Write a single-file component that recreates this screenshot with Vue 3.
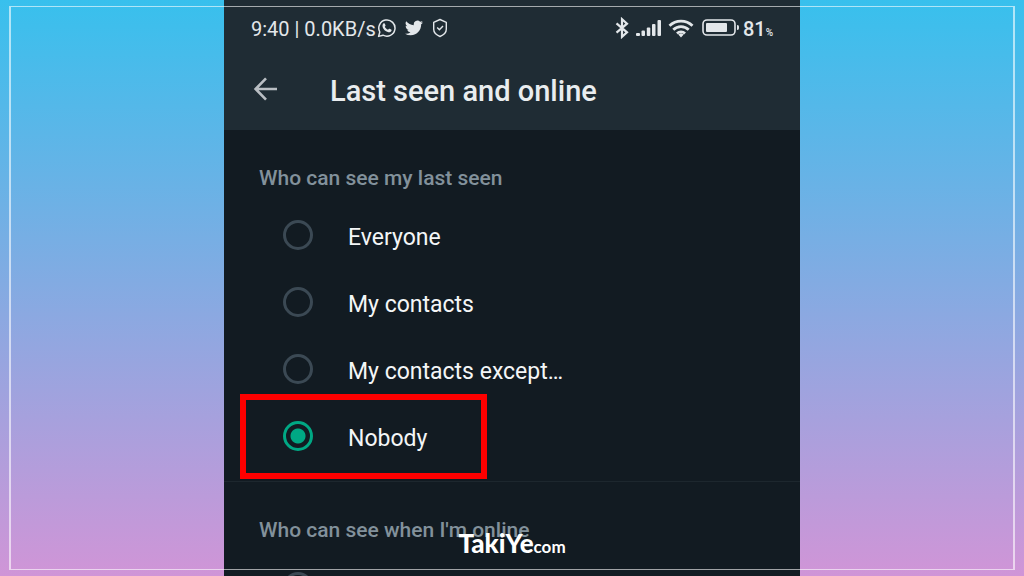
<script setup>
import { ref } from 'vue'

const options = [
  { value: 'everyone', label: 'Everyone' },
  { value: 'contacts', label: 'My contacts' },
  { value: 'except', label: 'My contacts except…' },
  { value: 'nobody', label: 'Nobody' },
]
const lastSeen = ref('nobody')
const online = ref('')
</script>

<template>
  <div class="page">
    <main class="phone">
      <header class="top">
        <div class="status">
          <span class="clock">9:40 | 0.0KB/s</span>
          <svg class="whatsapp" viewBox="0 0 20 20" width="20" height="20" fill="none" stroke="currentColor">
            <path d="M1.6 18.4 2.8 14A8.1 8.1 0 1 1 6 17.2Z" stroke-width="1.5" stroke-linejoin="round" />
            <path d="M6.3 5.6c.4-.5 1.2-.5 1.5.1l.7 1.5c.1.3 0 .6-.2.9l-.5.6c.7 1.4 1.7 2.4 3.2 3.1l.8-.8c.2-.3.5-.3.8-.2l1.5.7c.6.3.6.8.3 1.4-.7 1.3-2.1 1.7-3.6 1.2-2.5-.8-4.4-2.8-5.1-4.9-.4-1.4-.2-2.6.6-3.6Z" fill="currentColor" stroke="none" />
          </svg>
          <svg class="bird" viewBox="0 0 24 24" width="18" height="18" fill="currentColor">
            <path d="M23.950 4.570a10 10 0 0 1-2.820.770 4.960 4.960 0 0 0 2.160-2.720c-.950.550-2 .950-3.130 1.180a4.920 4.920 0 0 0-8.380 4.480C7.690 8.090 4.070 6.130 1.640 3.160a4.920 4.920 0 0 0 1.520 6.570 4.900 4.900 0 0 1-2.230-.610v.060a4.920 4.920 0 0 0 3.950 4.830 5 5 0 0 1-2.210.080 4.940 4.940 0 0 0 4.600 3.420A9.870 9.870 0 0 1 0 19.540a14 14 0 0 0 7.550 2.210c9.050 0 14-7.500 14-13.980l-.020-.640a9.940 9.940 0 0 0 2.420-2.560Z" />
          </svg>
          <svg class="shield" viewBox="0 0 16 20" width="16" height="20" fill="none" stroke="currentColor" stroke-width="1.4" stroke-linejoin="round">
            <path d="M8 1.500 14.300 4.300v7c0 3.400-3 5.900-6.300 7.200-3.300-1.300-6.300-3.800-6.300-7.200v-7Z" />
            <path d="m5.200 9.500 2.200 2.200 3.600-3.800" />
          </svg>
          <span class="spacer"></span>
          <svg class="bluetooth" viewBox="0 0 14 22" width="14" height="22" fill="none" stroke="currentColor" stroke-width="2.200">
            <path d="m1.500 6.300 10.500 9-5 4.500V2.200l5 4.500-10.500 9" />
          </svg>
          <svg class="signal" viewBox="0 0 26 18" width="26" height="18" fill="currentColor">
            <rect x="0" y="14" width="4" height="3" rx="1" />
            <rect x="5.500" y="11.500" width="3.500" height="5.500" rx="1" />
            <rect x="10.800" y="8.500" width="3.500" height="8.500" rx="1" />
            <rect x="16" y="5" width="3.500" height="12" rx="1" />
            <rect x="21.500" y="1" width="3.500" height="16" rx="1" />
          </svg>
          <svg class="wifi" viewBox="0 0 26 19" width="26" height="19" fill="none" stroke="currentColor" stroke-width="2.800">
            <path d="M1.500 6.800a16.500 16.500 0 0 1 23 0M5.300 10.800a11 11 0 0 1 15.400 0M9 14.500a5.800 5.800 0 0 1 8 0" />
            <path d="m10.300 15.600 2.700 2.900 2.700-2.900a4 4 0 0 0-5.400 0Z" fill="currentColor" stroke="none" />
          </svg>
          <svg class="battery" viewBox="0 0 38 18" width="38" height="18" fill="none">
            <rect x="1" y="1" width="32" height="15" rx="4" stroke="currentColor" stroke-width="1.600" />
            <rect x="4" y="4" width="21" height="9" rx="1" fill="currentColor" />
            <path d="M35 6c1.600 0 2 .8 2 2.500S36.600 11 35 11Z" fill="currentColor" />
          </svg>
          <span class="level">81<small>%</small></span>
        </div>
        <div class="bar">
          <button class="back" type="button" aria-label="Back">
            <svg viewBox="0 0 24 24" width="24" height="24" fill="none" stroke="currentColor" stroke-width="2.600">
              <path d="M24 12H3M13 1.300 2.600 12 13 22.700" />
            </svg>
          </button>
          <h1>Last seen and online</h1>
        </div>
      </header>

      <fieldset class="group">
        <legend>Who can see my last seen</legend>
        <label v-for="o in options" :key="o.value" class="option" :class="{ marked: o.value === 'nobody' }">
          <input v-model="lastSeen" type="radio" name="last-seen" :value="o.value" />
          <span>{{ o.label }}</span>
        </label>
      </fieldset>
      <fieldset class="group">
        <legend>Who can see when I'm online</legend>
        <label class="option">
          <input v-model="online" type="radio" name="online" value="everyone" aria-label="Everyone" />
        </label>
      </fieldset>
    </main>
    <div class="frame"></div>
    <div class="brand">TakiYe<small>com</small></div>
  </div>
</template>

<style>
body {
  margin: 0;
}
</style>

<style scoped>
.page {
  position: relative;
  height: 100vh;
  overflow: hidden;
  display: flex;
  justify-content: center;
  background: linear-gradient(#38c0ed, #d095d7);
  font-family: Roboto, "Liberation Sans", sans-serif;
}
.phone {
  width: 56.25%;
  background: #121b22;
  color: #e9edef;
}
.top {
  height: 130px;
  background: #1f2c34;
}
.status {
  display: flex;
  align-items: center;
  height: 56px;
  padding: 0 27px;
  color: #e3e7ea;
  font-size: 20px;
  white-space: nowrap;
}
.status svg {
  flex: none;
}
.status span {
  padding-top: 2px;
}
.whatsapp {
  margin-left: 1px;
}
.bird {
  margin-left: 8px;
}
.shield {
  margin-left: 9px;
}
.spacer {
  flex: 1;
}
.signal {
  margin-left: 7px;
}
.wifi {
  margin-left: 6px;
}
.battery {
  margin-left: 8px;
}
.level {
  margin-left: 3px;
  font-weight: 500;
}
.level small {
  font-size: 10px;
}
.bar {
  display: flex;
  align-items: center;
  height: 66px;
  padding-left: 29px;
}
.back {
  display: flex;
  padding: 0;
  border: 0;
  background: none;
  color: #b9bec3;
}
h1 {
  margin: 0 0 0 53px;
  padding-top: 4px;
  font-size: 29px;
  font-weight: 500;
  line-height: 34px;
  white-space: nowrap;
}
.group {
  margin: 0;
  padding: 0 0 12px;
  border: 0;
  border-bottom: 1px solid #1d272e;
  min-width: 0;
}
legend {
  box-sizing: border-box;
  height: 71px;
  padding: 36px 0 0 35px;
  color: #82919b;
  font-size: 21px;
  font-weight: 500;
  line-height: 24px;
}
.option {
  position: relative;
  display: flex;
  align-items: center;
  gap: 35px;
  height: 67px;
  padding-left: 59px;
  color: #f4f6f7;
  font-size: 23px;
}
.option span {
  padding-top: 5px;
}
.option input {
  appearance: none;
  flex: none;
  box-sizing: border-box;
  width: 30px;
  height: 30px;
  margin: 0;
  border: 3px solid #3b4954;
  border-radius: 50%;
}
.option input:checked {
  border-color: #00a884;
  background: radial-gradient(circle, #00a884 7px, transparent 8px);
}
.marked::after {
  content: "";
  position: absolute;
  box-sizing: border-box;
  top: -8px;
  bottom: -10px;
  left: 16px;
  width: 247px;
  border: 6px solid #fe0000;
}
.frame {
  position: absolute;
  inset: 6px 9px;
  border: 1px solid rgba(255, 255, 255, 0.6);
  border-width: 1px 2px;
  pointer-events: none;
}
.brand {
  position: absolute;
  bottom: 15px;
  left: 50%;
  transform: translateX(-50%);
  color: #fff;
  font-family: Lato, sans-serif;
  font-size: 26px;
  font-weight: 900;
  line-height: 28px;
  white-space: nowrap;
}
.brand small {
  font-size: 17px;
  font-weight: 700;
}
</style>
